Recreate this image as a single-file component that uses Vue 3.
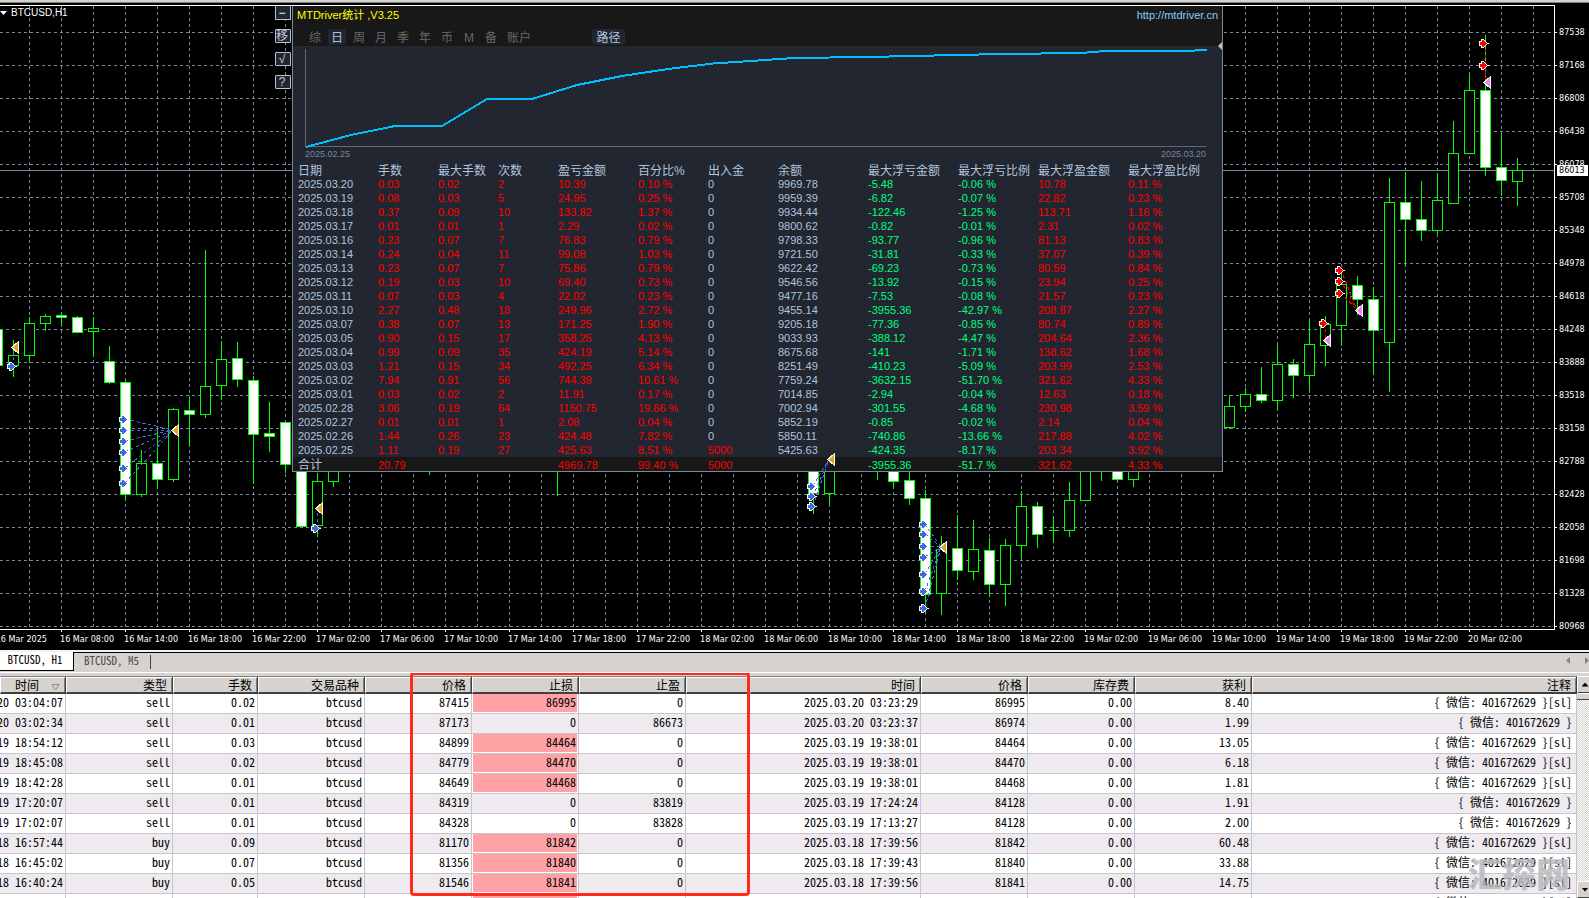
<script setup>
const gridX = Array.from({ length: 48 }, (_, i) => 29.5 + i * 32)
const gridY = Array.from({ length: 19 }, (_, i) => 32.5 + i * 33)

const prices = [87538, 87168, 86808, 86438, 86078, 85708, 85348, 84978, 84618, 84248, 83888, 83518, 83158, 82788, 82428, 82058, 81698, 81328, 80968]

const times = [
  '16 Mar 08:00', '16 Mar 14:00', '16 Mar 18:00', '16 Mar 22:00',
  ...['17', '18', '19'].flatMap(d => ['02', '06', '10', '14', '18', '22'].map(h => `${d} Mar ${h}:00`)),
  '20 Mar 02:00'
]

// x, falling, high, body top, body bottom, low
const candles = [
  [-3, 1, 329, 329, 365, 365], [13, 0, 340, 355, 365, 376], [29, 0, 317, 323, 355, 362],
  [45, 0, 314, 316, 323, 330], [61, 1, 313, 315, 317, 325], [77, 1, 316, 317, 332, 332],
  [93, 0, 317, 328, 331, 355], [109, 1, 346, 361, 382, 383], [125, 1, 380, 382, 494, 499],
  [141, 0, 450, 463, 494, 496], [157, 1, 429, 463, 479, 488], [173, 0, 408, 409, 479, 481],
  [189, 1, 397, 410, 414, 445], [205, 0, 250, 386, 414, 417], [221, 0, 341, 359, 385, 399],
  [237, 1, 342, 358, 379, 386], [253, 1, 376, 380, 434, 483], [269, 1, 402, 433, 436, 451],
  [285, 1, 422, 422, 464, 472], [301, 1, 464, 465, 526, 526], [317, 0, 473, 481, 525, 536],
  [333, 0, 460, 465, 481, 486], [429, 0, 440, 450, 460, 474], [557, 0, 440, 450, 460, 495],
  [813, 1, 450, 455, 493, 513], [829, 0, 450, 455, 493, 503], [877, 0, 440, 450, 460, 479],
  [893, 1, 450, 455, 481, 488], [909, 1, 460, 480, 498, 504], [925, 1, 490, 498, 594, 611],
  [941, 0, 536, 549, 593, 614], [957, 1, 515, 548, 570, 579], [973, 0, 520, 549, 571, 579],
  [989, 1, 538, 550, 584, 596], [1005, 0, 539, 545, 584, 605], [1021, 0, 491, 506, 545, 558],
  [1037, 1, 502, 506, 534, 547], [1053, 0, 517, 530, 530, 542], [1069, 0, 482, 500, 530, 536],
  [1085, 0, 450, 455, 500, 500], [1101, 0, 440, 450, 460, 480], [1117, 1, 450, 455, 479, 481],
  [1133, 0, 450, 455, 479, 486], [1229, 0, 395, 406, 427, 428], [1245, 0, 388, 394, 406, 411],
  [1261, 1, 367, 394, 400, 402], [1277, 0, 345, 364, 400, 409], [1293, 1, 359, 364, 375, 397],
  [1309, 0, 321, 344, 375, 389], [1325, 0, 316, 324, 345, 365], [1341, 0, 271, 284, 325, 345],
  [1357, 1, 276, 285, 299, 314], [1373, 1, 287, 299, 330, 374], [1389, 0, 178, 202, 342, 391],
  [1405, 1, 172, 202, 219, 265], [1421, 1, 181, 219, 230, 240], [1437, 0, 173, 200, 230, 233],
  [1453, 0, 121, 153, 203, 203], [1469, 0, 75, 90, 153, 153], [1485, 1, 35, 90, 167, 175],
  [1501, 1, 135, 167, 180, 195], [1517, 0, 158, 170, 181, 205]
]

// each deal group: kind, open x, open prices, close point
const deals = [
  ['buy', 11, [366], [15, 347]],
  ['buy', 123, [419, 430, 441, 452, 468, 483], [175, 430]],
  ['buy', 315, [528], [319, 508]],
  ['buy', 811, [486, 496, 506], [831, 459]],
  ['buy', 923, [524, 534, 546, 557, 574, 591, 608], [943, 547]],
  ['sell', 1483, [43, 65], [1487, 82]],
  ['sell', 1339, [270, 281, 293], [1359, 310]],
  ['sell', 1323, [323], [1327, 340]]
]

const tools = ['−', '移', '√', '?']
const views = ['综', '日', '周', '月', '季', '年', '币', 'M', '备', '账户', '路径']

const statHeads = ['日期', '手数', '最大手数', '次数', '盈亏金额', '百分比%', '出入金', '余额', '最大浮亏金额', '最大浮亏比例', '最大浮盈金额', '最大浮盈比例']
const tones = ['', 'red', 'red', 'red', 'red', 'red', '', '', 'green', 'green', 'red', 'red']
const stats = `2025.03.20|0.03|0.02|2|10.39|0.10 %|0|9969.78|-5.48|-0.06 %|10.78|0.11 %
2025.03.19|0.08|0.03|5|24.95|0.25 %|0|9959.39|-6.82|-0.07 %|22.82|0.23 %
2025.03.18|0.37|0.09|10|133.82|1.37 %|0|9934.44|-122.46|-1.25 %|113.71|1.16 %
2025.03.17|0.01|0.01|1|2.29|0.02 %|0|9800.62|-0.82|-0.01 %|2.31|0.02 %
2025.03.16|0.23|0.07|7|76.83|0.79 %|0|9798.33|-93.77|-0.96 %|81.13|0.83 %
2025.03.14|0.24|0.04|11|99.08|1.03 %|0|9721.50|-31.81|-0.33 %|37.07|0.39 %
2025.03.13|0.23|0.07|7|75.86|0.79 %|0|9622.42|-69.23|-0.73 %|80.59|0.84 %
2025.03.12|0.19|0.03|10|69.40|0.73 %|0|9546.56|-13.92|-0.15 %|23.94|0.25 %
2025.03.11|0.07|0.03|4|22.02|0.23 %|0|9477.16|-7.53|-0.08 %|21.57|0.23 %
2025.03.10|2.27|0.48|18|249.96|2.72 %|0|9455.14|-3955.36|-42.97 %|208.87|2.27 %
2025.03.07|0.38|0.07|13|171.25|1.90 %|0|9205.18|-77.36|-0.85 %|80.74|0.89 %
2025.03.05|0.90|0.15|17|358.25|4.13 %|0|9033.93|-388.12|-4.47 %|204.64|2.36 %
2025.03.04|0.99|0.09|35|424.19|5.14 %|0|8675.68|-141|-1.71 %|138.62|1.68 %
2025.03.03|1.21|0.15|34|492.25|6.34 %|0|8251.49|-410.23|-5.09 %|203.99|2.53 %
2025.03.02|7.94|0.91|56|744.39|10.61 %|0|7759.24|-3632.15|-51.70 %|321.62|4.33 %
2025.03.01|0.03|0.02|2|11.91|0.17 %|0|7014.85|-2.94|-0.04 %|12.63|0.18 %
2025.02.28|3.06|0.19|64|1150.75|19.66 %|0|7002.94|-301.55|-4.68 %|230.98|3.59 %
2025.02.27|0.01|0.01|1|2.08|0.04 %|0|5852.19|-0.85|-0.02 %|2.14|0.04 %
2025.02.26|1.44|0.26|23|424.48|7.82 %|0|5850.11|-740.86|-13.66 %|217.88|4.02 %
2025.02.25|1.11|0.19|27|425.63|8.51 %|5000|5425.63|-424.35|-8.17 %|203.34|3.92 %`.split('\n').map(r => r.split('|'))
const total = '合计|20.79|||4969.78|99.40 %|5000||-3955.36|-51.7 %|321.62|4.33 %'.split('|')
const tone = (v, i) => (v === '5000' ? 'red' : tones[i])

const orderHeads = ['时间', '类型', '手数', '交易品种', '价格', '止损', '止盈', '', '时间', '价格', '库存费', '获利', '注释']
const note = '{ 微信: 401672629 }'
const orders = [
  ['2025.03.20 03:04:07', 'sell', '0.02', 87415, 86995, 0, '2025.03.20 03:23:29', 86995, '8.40', 1],
  ['2025.03.20 03:02:34', 'sell', '0.01', 87173, 0, 86673, '2025.03.20 03:23:37', 86974, '1.99', 0],
  ['2025.03.19 18:54:12', 'sell', '0.03', 84899, 84464, 0, '2025.03.19 19:38:01', 84464, '13.05', 1],
  ['2025.03.19 18:45:08', 'sell', '0.02', 84779, 84470, 0, '2025.03.19 19:38:01', 84470, '6.18', 1],
  ['2025.03.19 18:42:28', 'sell', '0.01', 84649, 84468, 0, '2025.03.19 19:38:01', 84468, '1.81', 1],
  ['2025.03.19 17:20:07', 'sell', '0.01', 84319, 0, 83819, '2025.03.19 17:24:24', 84128, '1.91', 0],
  ['2025.03.19 17:02:07', 'sell', '0.01', 84328, 0, 83828, '2025.03.19 17:13:27', 84128, '2.00', 0],
  ['2025.03.18 16:57:44', 'buy', '0.09', 81170, 81842, 0, '2025.03.18 17:39:56', 81842, '60.48', 1],
  ['2025.03.18 16:45:02', 'buy', '0.07', 81356, 81840, 0, '2025.03.18 17:39:43', 81840, '33.88', 1],
  ['2025.03.18 16:40:24', 'buy', '0.05', 81546, 81841, 0, '2025.03.18 17:39:56', 81841, '14.75', 1],
  ['', '', '', '', '', '', '', '', '', 1]
]
</script>

<template>
  <div class="terminal">
    <div class="edge"></div>
    <main class="chart">
      <div class="plot-col">
        <svg class="plot" role="img" aria-label="BTCUSD H1" shape-rendering="crispEdges">
          <g transform="translate(0,-6)">
            <g class="grid">
              <line v-for="x in gridX" :key="'x' + x" :x1="x" y1="6" :x2="x" y2="629" />
              <line v-for="y in gridY" :key="'y' + y" x1="0" :y1="y" x2="100%" :y2="y" />
            </g>
            <line class="level" x1="0" y1="170.5" x2="100%" y2="170.5" />
            <g v-for="c in candles" :key="c[0]" class="candle" :class="{ fall: c[1] }">
              <line :x1="c[0] + 0.5" :y1="c[2]" :x2="c[0] + 0.5" :y2="c[5] + 1" />
              <path :d="`M${c[0] - 4.5} ${c[3] + 0.5}h10v${c[4] - c[3]}h-10z`" />
            </g>
          </g>
        </svg>
        <div class="times">
          <span class="first">16 Mar 2025</span>
          <span v-for="t in times" :key="t">{{ t }}</span>
        </div>
      </div>
      <div class="prices">
        <span v-for="p in prices" :key="p">{{ p }}</span>
        <b class="now">86013</b>
      </div>

      <div class="symbol"><i></i>BTCUSD,H1</div>

      <div class="tools">
        <button v-for="t in tools" :key="t" type="button">{{ t }}</button>
      </div>

      <section class="panel">
        <header>
          <div class="title"><h1>MTDriver统计 ,V3.25</h1><a href="#">http://mtdriver.cn</a></div>
          <nav>
            <button v-for="v in views" :key="v" type="button" :class="{ on: v === '日' || v === '路径', wide: v === '账户', path: v === '路径' }">{{ v }}</button>
          </nav>
        </header>
        <svg class="curve" role="img" aria-label="余额" shape-rendering="crispEdges">
          <g transform="translate(-293,-46)">
            <path class="axis" d="M305.5 49V146.5H1206" />
            <path class="balance" d="M306 147L351 135 395 126 442 126 487 99 532 99 577 85 622 76 668 69 713 63.500 758 60.500 794 58 867 57 957 55 1002 54 1081 53 1105 51 1183 51 1207 50" />
          </g>
        </svg>
        <div class="range"><span>2025.02.25</span><span>2025.03.20</span></div>
        <table class="stats">
          <colgroup>
            <col v-for="n in 12" :key="n" :class="'s' + n">
          </colgroup>
          <thead>
            <tr><th v-for="h in statHeads" :key="h" scope="col">{{ h }}</th></tr>
          </thead>
          <tbody>
            <tr v-for="r in stats" :key="r[0]">
              <td v-for="(v, i) in r" :key="i" :class="tone(v, i)">{{ v }}</td>
            </tr>
          </tbody>
          <tfoot>
            <tr><td v-for="(v, i) in total" :key="i" :class="tone(v, i)">{{ v }}</td></tr>
          </tfoot>
        </table>
        <i class="grip"></i>
      </section>

      <svg class="deals" aria-hidden="true" shape-rendering="crispEdges">
        <g v-for="(d, n) in deals" :key="n" :class="d[0]" transform="translate(0,-6)">
          <line v-for="y in d[2]" :key="'l' + y" :x1="d[1] + 2" :y1="y" :x2="d[3][0] - 2" :y2="d[3][1]" />
          <path v-for="y in d[2]" :key="'a' + y" class="open" :transform="`translate(${d[1]},${y + 0.5})`" d="M-3 -1.500H-1V-3.500H0L4 0 0 3.500H-1V1.500H-3Z" />
          <path class="close" :transform="`translate(${d[3][0]},${d[3][1] + 0.5})`" d="M2.500 -4.500V4.500L-2.500 0Z" />
        </g>
      </svg>
    </main>

    <div class="tabs">
      <button type="button" class="on">BTCUSD, H1</button>
      <button type="button" class="off">BTCUSD, M5</button>
      <span class="bar"></span>
      <span class="arrows"><i class="left"></i><i class="right"></i></span>
    </div>

    <section class="history">
      <table>
        <colgroup>
          <col v-for="n in 13" :key="n" :class="'c' + n">
        </colgroup>
        <thead>
          <tr>
            <th v-for="(h, i) in orderHeads" :key="i" scope="col" :class="{ join: i === 7 }">{{ h }}<svg v-if="i === 0" class="sort" width="9" height="8" viewBox="0 0 9 8"><path d="M1 1.500H8L4.500 7Z" fill="none" stroke="#8c8c8c" /></svg></th>
          </tr>
        </thead>
        <tbody>
          <tr v-for="(o, i) in orders" :key="i">
            <td><span class="clip">{{ o[0] }}</span></td>
            <td>{{ o[1] }}</td>
            <td>{{ o[2] }}</td>
            <td>{{ o[0] ? 'btcusd' : '' }}</td>
            <td>{{ o[3] }}</td>
            <td :class="{ hit: o[9] }">{{ o[4] }}</td>
            <td>{{ o[5] }}</td>
            <td class="join"></td>
            <td>{{ o[6] }}</td>
            <td>{{ o[7] }}</td>
            <td>{{ o[0] ? '0.00' : '' }}</td>
            <td>{{ o[8] }}</td>
            <td class="note">{{ note }}{{ o[9] ? '[sl]' : '' }}</td>
          </tr>
        </tbody>
      </table>
      <div class="scroll">
        <button type="button" aria-label="Up"><i class="up"></i></button>
        <span class="thumb"></span>
        <span class="track"></span>
        <button type="button" aria-label="Down"><i class="down"></i></button>
      </div>
      <div class="mark-box"></div>
      <div class="watermark">汇探网</div>
    </section>
  </div>
</template>

<style>
body { margin: 0; background: #000; overflow: hidden; }
</style>

<style scoped>
* { box-sizing: border-box; }
button { margin: 0; padding: 0; border: 0; background: none; font: inherit; color: inherit; }
i { display: block; }

.terminal {
  display: flex;
  flex-direction: column;
  height: 100vh;
  overflow: hidden;
  background: #d6d3ce;
  color: #000;
  font: 12px/14px "Liberation Sans", "Noto Sans CJK SC", sans-serif;
}
.edge { flex: none; height: 5px; background: #000; border-top: 2px solid #d6d3ce; box-shadow: inset 0 1px #808080; }

/* chart */
.chart { position: relative; flex: none; display: flex; background: #000; color: #fff; }
.plot-col { flex: 1; min-width: 0; border-top: 1px solid #fff; }
.plot { display: block; width: 100%; height: 624px; border-right: 1px solid #fff; border-bottom: 1px solid #fff; }
.grid line { stroke: #778899; stroke-dasharray: 3 3; }
.level { stroke: #778899; }
.candle line, .candle path { stroke: #00ff00; fill: #000; }
.candle.fall path { fill: #fff; }
.times { display: flex; height: 20px; overflow: hidden; font: 9px/18px "DejaVu Sans Condensed", "Liberation Sans", sans-serif; white-space: nowrap; }
.times span { flex: none; width: 64px; background: linear-gradient(#fff, #fff) 1px 0 / 1px 2px no-repeat; }
.times .first { display: flex; justify-content: flex-end; width: 60px; padding-right: 13px; background: none; }
.prices { position: relative; flex: none; width: 34px; padding-top: 11px; font: 9px/33px "DejaVu Sans Condensed", "Liberation Sans", sans-serif; }
.prices span { display: block; height: 33px; padding-left: 4px; background: linear-gradient(#fff, #fff) 0 16px / 2px 1px no-repeat; }
.prices span:last-of-type { height: 20px; overflow: visible; }
.prices .now { position: absolute; top: 160px; left: 2px; right: 1px; padding-left: 2px; background: #fff; color: #000; font-weight: 400; line-height: 11px; }
.symbol { position: absolute; top: 1px; left: 0; display: flex; align-items: center; gap: 4px; font-size: 10px; }
.symbol i { width: 7px; height: 4px; background: #fff; clip-path: polygon(0 0, 100% 0, 50% 100%); }

.tools { position: absolute; top: 1px; left: 275px; display: flex; flex-direction: column; gap: 9px; color: #c8cdd4; }
.tools button { width: 16px; height: 14px; padding-right: 2px; border: 1px solid #b0c4de; border-radius: 1px; background: #212630; line-height: 12px; }
.tools button:first-child { border-top: 0; color: #fff; }

.panel { position: absolute; top: 1px; left: 292px; width: 931px; border: solid #778899; border-width: 0 1px 1px; background: #212630; color: #b0c4de; font-size: 11px; }
.panel header { background: #181818; }
.title { display: flex; justify-content: space-between; height: 18px; padding: 0 4px; line-height: 18px; }
.title h1 { margin: 0; font-size: 11px; font-weight: 400; color: #ffff00; }
.title a { color: #87cefa; text-decoration: none; }
.panel nav { display: flex; gap: 4px; height: 22px; padding: 5px 13px 1px; color: #696969; font-size: 12px; line-height: 14px; }
.panel nav button { width: 18px; height: 16px; padding-top: 2px; border-radius: 2px; }
.panel nav .wide { width: 30px; }
.panel nav .path { width: 33px; margin-left: 54px; }
.panel nav .on { background: #212630; color: #b0c4de; }
.curve { display: block; width: 100%; height: 102px; }
.axis { fill: none; stroke: #696969; }
.balance { fill: none; stroke: #00bfff; stroke-width: 2; }
.range { display: flex; justify-content: space-between; height: 15px; padding: 0 16px 0 12px; color: #778899; font-size: 9px; line-height: 12px; }
.stats { width: 100%; table-layout: fixed; border-collapse: collapse; line-height: 14px; }
.stats th, .stats td { height: 14px; padding: 0 0 0 5px; text-align: left; font-weight: 400; white-space: nowrap; }
.stats th { padding-top: 2px; font-size: 12px; line-height: 12px; }
.stats tfoot { background: #181818; }
.stats tfoot td { padding-top: 2px; line-height: 12px; }
.stats tfoot td:first-child { font-size: 12px; }
.s1, .s5, .s10 { width: 80px; }
.s2, .s3, .s4 { width: 60px; }
.s6, .s7 { width: 70px; }
.s8, .s9, .s11 { width: 90px; }
.red { color: #ff0000; }
.green { color: #00ff7f; }
.grip { position: absolute; top: 36px; right: 0; width: 4px; height: 8px; background: #c0c0c0; clip-path: polygon(100% 0, 100% 100%, 0 50%); }

.deals { position: absolute; top: 1px; left: 0; width: 100%; height: 623px; pointer-events: none; }
.deals line { stroke-dasharray: 3 3; }
.deals path { stroke: #fff; stroke-width: 2; paint-order: stroke; }
.buy line { stroke: #4169e1; }
.buy .open { fill: #4169e1; }
.buy .close { fill: #daa520; }
.sell line { stroke: #ff0000; }
.sell .open { fill: #ff0000; }
.sell .close { fill: #ee82ee; }

/* chart tabs */
.tabs { flex: none; display: flex; height: 23px; border-top: 2px solid #f4f2ee; border-bottom: 1px solid #fff; box-shadow: inset 0 1px #000; font: 11px/15px "Noto Sans CJK SC", sans-serif; font-feature-settings: "hwid"; }
.tabs button { height: 19px; padding-bottom: 3px; }
.tabs .on { width: 74px; padding-right: 3px; background: #fff; border: solid #000; border-width: 0 1px 1px 0; }
.tabs .off { width: 76px; padding-right: 1px; color: #4a4a4a; }
.bar { width: 1px; height: 14px; margin-top: 3px; background: #404040; }
.arrows { display: flex; gap: 15px; margin: 5px 0 0 auto; }
.arrows i { width: 4px; height: 7px; background: #848484; }
.arrows .left { clip-path: polygon(100% 0, 100% 100%, 0 50%); }
.arrows .right { clip-path: polygon(0 0, 0 100%, 100% 50%); }

/* order history */
.history { position: relative; flex: 1; min-height: 0; display: flex; overflow: clip; overflow-clip-margin: 3px; border-top: 3px solid #d6d3ce; }
.history table { flex: 1; width: 0; align-self: flex-start; table-layout: fixed; border-collapse: separate; border-spacing: 0; background: #fff; font: 12px/16px "Noto Sans CJK SC", sans-serif; font-feature-settings: "hwid"; }
.history th, .history td { padding: 0 2px 3px; text-align: right; font-weight: 400; white-space: nowrap; overflow: hidden; }
.history th { height: 18px; padding: 0 5px 0 2px; background: #d6d3ce; border: solid; border-width: 1px 1px 2px; border-color: #808080 #404040 #404040 #fff; line-height: 15px; box-shadow: inset 0 1px #fff, inset -1px 0 #808080; }
.history th:nth-child(8) { border-right-color: #d6d3ce; box-shadow: inset 0 1px #fff; }
.history th:nth-child(9) { border-left-color: #d6d3ce; }
.history td { height: 20px; border: solid #c6c6c9; border-width: 0 1px 1px 0; }
.history td:first-child { padding-left: 0; }
.history td.join { border-right-color: transparent; }
.history tr:nth-child(even) td { background: #eeeaef; }
.history tr td.hit, .history tr:nth-child(even) td.hit { background: #ffa2a6; box-shadow: inset 1px -1px #fff, inset -1px 0 #fff; }
.history td.note { padding-right: 4px; }
.clip { display: flex; justify-content: flex-end; overflow: hidden; }
.sort { margin: 0 0 0 12px; vertical-align: -1px; }
.c1 { width: 66px; }
.c2, .c4, .c5, .c6, .c7, .c10, .c11 { width: 107px; }
.c3 { width: 85px; }
.c8 { width: 64px; }
.c9 { width: 171px; }
.c12 { width: 117px; }

.scroll { flex: none; display: flex; flex-direction: column; width: 12px; overflow: hidden; background: #d6d3ce; }
.scroll button { display: flex; align-items: center; justify-content: center; width: 16px; height: 17px; border: 1px solid; border-color: #fff #404040 #404040 #fff; background: #d6d3ce; }
.scroll i { width: 7px; height: 4px; background: #000; }
.scroll .up { clip-path: polygon(50% 0, 100% 100%, 0 100%); }
.scroll .down { clip-path: polygon(0 0, 100% 0, 50% 100%); }
.thumb { height: 7px; border-top: 1px solid #fff; border-bottom: 1px solid #404040; }
.track { flex: 1; background: repeating-conic-gradient(#fff 0 25%, #d6d3ce 0 50%) 0 0 / 2px 2px; }

.mark-box { position: absolute; top: -4px; left: 410px; width: 340px; height: 224px; border: 3px solid #ff2a1c; border-radius: 4px; }
.watermark { position: absolute; right: 19px; bottom: 7px; color: #b9b9bdd9; font: 900 34px/36px "Noto Sans CJK SC", sans-serif; }
</style>
